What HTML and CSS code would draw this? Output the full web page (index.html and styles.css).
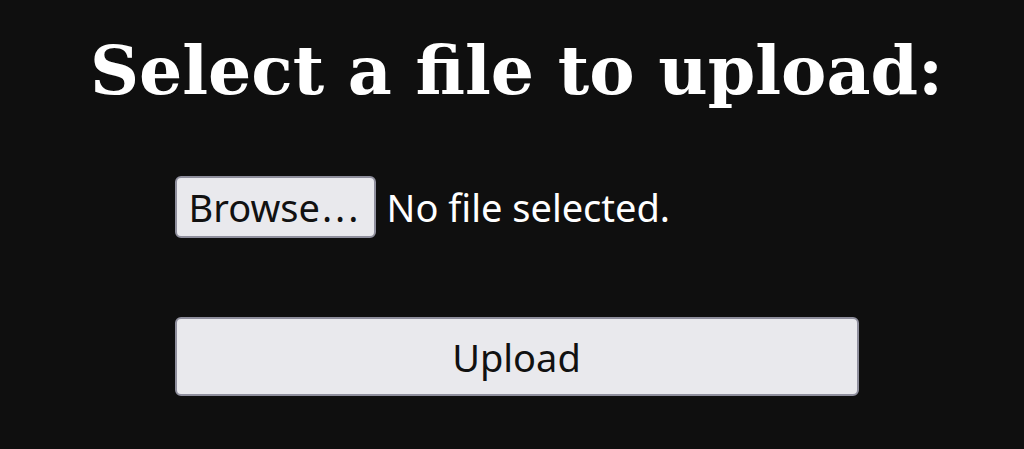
FILE: index.html
```html
<!DOCTYPE html>
<html>
<head>
<meta charset="utf-8">
<link rel="stylesheet" href="styles.css">
</head>
<body>
<main class="page">
  <h1 class="title">Select a file to upload:</h1>
  <form class="form">
    <div class="file-row">
      <span class="browse">Browse<span class="dots">...</span></span>
      <span class="file-status">No file selected.</span>
    </div>
    <div class="upload">Upload</div>
  </form>
</main>
</body>
</html>
```

FILE: styles.css
```css
html, body {
  margin: 0;
  padding: 0;
  background: #0f0f0f;
  height: 100%;
}
.page {
  display: flex;
  flex-direction: column;
  align-items: center;
  padding-left: 9px;
}
.title {
  margin: 30px 0 0 0;
  font-family: "DejaVu Serif", serif;
  font-weight: bold;
  font-size: 68px;
  line-height: 80px;
  color: #ffffff;
  white-space: nowrap;
}
.form {
  width: 684px;
  display: flex;
  flex-direction: column;
  margin-top: 66px;
}
.file-row {
  display: flex;
  align-items: center;
  gap: 11px;
}
.browse {
  box-sizing: border-box;
  height: 62px;
  width: 201px;
  display: flex;
  align-items: center;
  justify-content: center;
  background: #e9e9ed;
  border: 2px solid #8f8f9d;
  border-radius: 6px;
  font-family: "Noto Sans", sans-serif;
  font-size: 38px;
  color: #111;
  white-space: nowrap;
}
.dots {
  letter-spacing: 3px;
  margin-left: 2px;
}
.file-status {
  font-family: "Noto Sans", sans-serif;
  font-size: 38px;
  color: #ffffff;
}
.upload {
  box-sizing: border-box;
  margin-top: 79px;
  height: 79px;
  display: flex;
  align-items: center;
  justify-content: center;
  background: #e9e9ed;
  border: 2px solid #8f8f9d;
  border-radius: 6px;
  font-family: "Noto Sans", sans-serif;
  font-size: 38px;
  color: #111;
}
```
